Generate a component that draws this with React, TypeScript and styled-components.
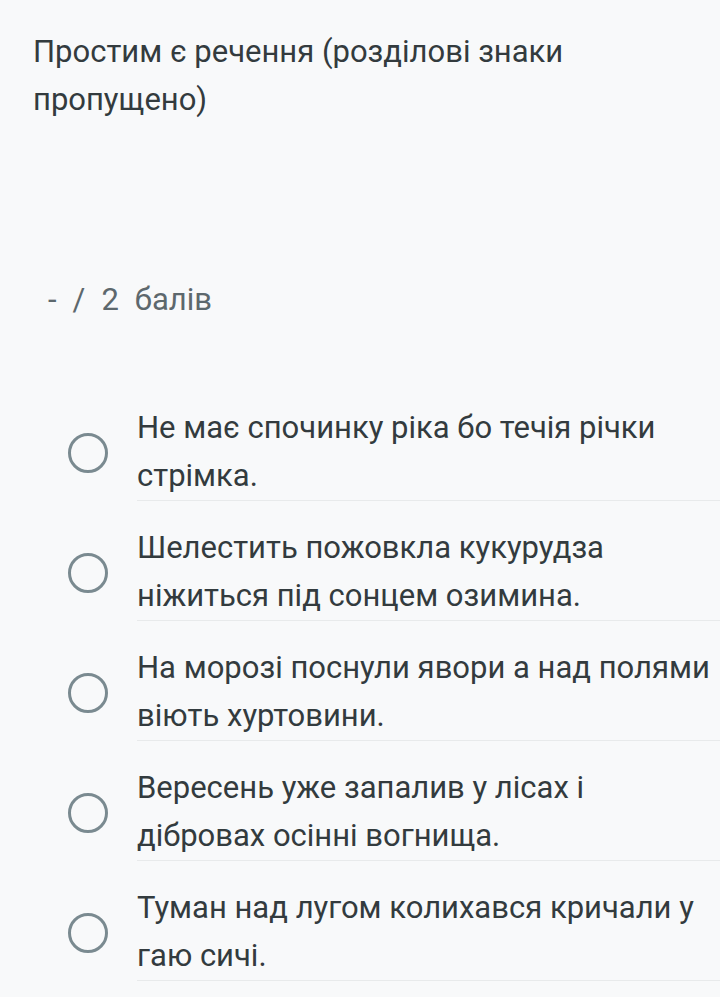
import styled, { createGlobalStyle } from 'styled-components';

const GlobalStyle = createGlobalStyle`
  html, body {
    margin: 0;
    padding: 0;
    background: #f8f9fa;
  }
  body {
    font-family: Roboto, "Noto Sans", sans-serif;
    color: #333b3e;
  }
`;

const options = [
  'Не має спочинку ріка бо течія річки стрімка.',
  'Шелестить пожовкла кукурудза ніжиться під сонцем озимина.',
  'На морозі поснули явори а над полями віють хуртовини.',
  'Вересень уже запалив у лісах і дібровах осінні вогнища.',
  'Туман над лугом колихався кричали у гаю сичі.',
];

export default function App() {
  return (
    <Page>
      <GlobalStyle />
      <Title>Простим є речення (розділові знаки пропущено)</Title>
      <Score>
        <span>-</span>
        <span>/</span>
        <span>2</span>
        <span>балів</span>
      </Score>
      <List>
        {options.map((text) => (
          <Row key={text}>
            <Radio />
            <Label>{text}</Label>
          </Row>
        ))}
      </List>
    </Page>
  );
}

const Page = styled.div`
  min-height: 997px;
  padding-top: 28px;
  box-sizing: border-box;
`;

const Title = styled.h1`
  margin: 0;
  padding: 0 110px 0 33px;
  font-size: 31px;
  font-weight: 400;
  line-height: 48px;
  color: #333b3e;
`;

const Score = styled.div`
  margin-top: 152px;
  padding-left: 48px;
  display: flex;
  gap: 16px;
  font-size: 31px;
  line-height: 48px;
  color: #5d686d;
`;

const List = styled.div`
  display: flex;
  flex-direction: column;
  gap: 23px;
  padding-top: 80px;
`;

const Row = styled.div`
  display: flex;
  align-items: center;
`;

const Radio = styled.div`
  flex: none;
  width: 40px;
  height: 40px;
  box-sizing: border-box;
  margin: 0 29px 0 68px;
  border: 3px solid #7a8a90;
  border-radius: 50%;
`;

const Label = styled.div`
  flex: 1;
  padding-right: 4px;
  font-size: 31px;
  line-height: 48px;
  color: #333b3e;
  border-bottom: 1px solid #e8eaeb;
`;
